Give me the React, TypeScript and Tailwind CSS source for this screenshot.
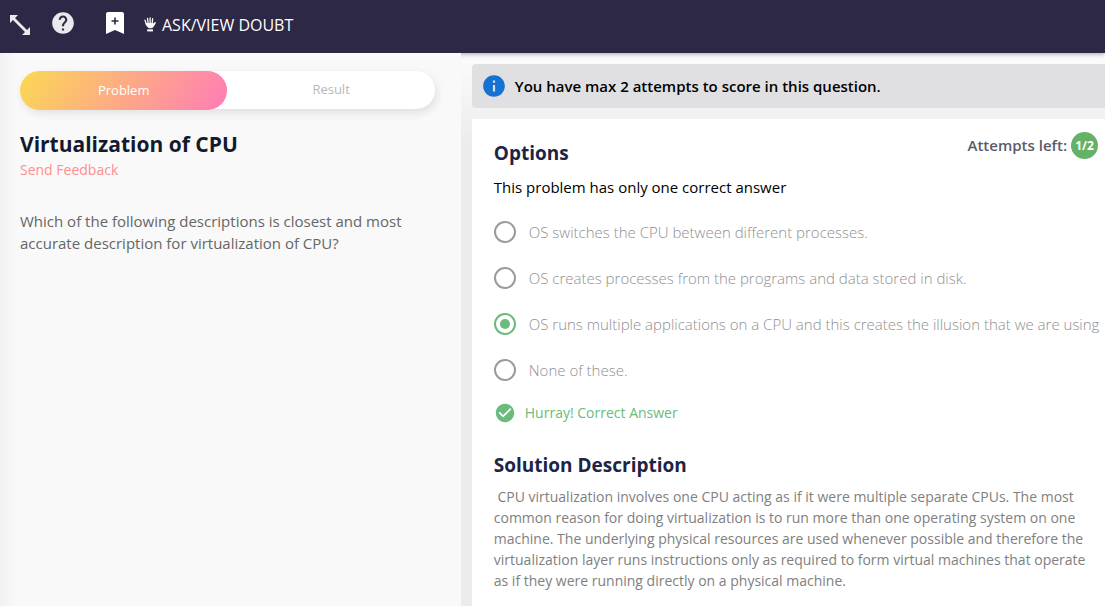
import React from "react";
import { MdCheckCircle, MdHelp, MdInfo } from "react-icons/md";

const options = [
  "OS switches the CPU between different processes.",
  "OS creates processes from the programs and data stored in disk.",
  "OS runs multiple applications on a CPU and this creates the illusion that we are using",
  "None of these.",
];

function ExpandIcon() {
  return (
    <svg width="20" height="20" viewBox="0 0 20 20" fill="#e9e9ee" aria-hidden="true">
      <path d="M0 0h8L5 3l12 12 3-3v8h-8l3-3L3 5 0 8z" />
    </svg>
  );
}

function BookmarkIcon() {
  return (
    <svg width="18" height="22" viewBox="0 0 18 22" aria-hidden="true">
      <path d="M2 0h14a2 2 0 0 1 2 2v20l-9-4L0 22V2a2 2 0 0 1 2-2z" fill="#fff" />
      <path d="M9 5.500v7M5.500 9h7" stroke="#2c2846" strokeWidth="1.600" />
    </svg>
  );
}

function HandIcon() {
  return (
    <svg width="12" height="15" viewBox="0 0 12 15" fill="none" stroke="#fff" strokeLinecap="round" aria-hidden="true">
      <path d="M1 3.200L2.600 8M3.500 1.300L4.200 7M6.100 .8v6M8.700 1.600L8.100 7" strokeWidth="1.300" />
      <path
        d="M2.200 6.500h6.200l.6 .6 1.700-1.600c.6-.3 1 .1.7 .7L8.800 10.300c-1 .8-3.800 .8-4.800 0z"
        fill="#fff"
        strokeWidth="0.800"
        strokeLinejoin="round"
      />
      <path d="M3.200 13.400h5.800" strokeWidth="2" strokeLinecap="butt" />
    </svg>
  );
}

export default function App() {
  return (
    <div className="flex min-h-screen flex-col overflow-hidden bg-[#ececec] font-['Open_Sans','Noto_Sans',sans-serif]">
      <header className="relative z-0 flex h-[53px] items-center bg-[#2c2846] px-2.5 pb-1 text-white shadow-[0_1px_5px_rgba(0,0,0,0.35)]">
        <button type="button" aria-label="Expand">
          <ExpandIcon />
        </button>
        <button type="button" aria-label="Help" className="mb-1 ml-5">
          <MdHelp size={26} color="#e9e9ee" />
        </button>
        <button type="button" aria-label="Bookmark" className="mb-1 ml-[30px]">
          <BookmarkIcon />
        </button>
        <button type="button" className="ml-5 flex items-center gap-1.5 text-[16px]">
          <HandIcon />
          ASK/VIEW DOUBT
        </button>
      </header>

      <main className="flex flex-1">
        <section className="relative z-10 w-[41.7%] shrink-0 bg-[#f9f9f9] bg-linear-to-r from-[#f1f1f1] to-[#f9f9f9] to-[16px] px-5 pt-[18px]">
          <div
            role="tablist"
            className="mr-1.5 flex h-[38px] rounded-full bg-white text-[13px] shadow-[2px_4px_10px_rgba(0,0,0,0.1)]"
          >
            <button
              type="button"
              role="tab"
              aria-selected="true"
              className="h-[39px] flex-1 rounded-full bg-linear-[120deg] from-[#fbd854] to-[#ff7cb6] text-white"
            >
              Problem
            </button>
            <button type="button" role="tab" aria-selected="false" className="flex-1 text-[#b8b8b8]">
              Result
            </button>
          </div>
          <h1 className="mt-[22px] text-[21px] leading-[26px] font-bold text-[#141a2e]">Virtualization of CPU</h1>
          <a href="#feedback" className="mt-[3px] block text-[14px] leading-5 text-[#ff8f8f]">
            Send Feedback
          </a>
          <p className="mt-[30px] max-w-[400px] text-[15px] leading-[22px] text-[#666]">
            Which of the following descriptions is closest and most accurate description for virtualization of CPU?
          </p>
        </section>

        <section className="flex min-w-0 flex-1 flex-col gap-[11px] bg-linear-to-b from-[#fcfcfc] to-[#ececec] to-[90px] pt-[11px] pl-[11px]">
          <div className="flex h-11 items-center gap-2 rounded-l bg-[#e0e0e2] px-[9px] text-[15px] font-semibold text-black">
            <MdInfo size={26} color="#1572d3" />
            You have max 2 attempts to score in this question.
          </div>

          <div className="flex-1 bg-white pt-[21px] pr-4 pl-[22px]">
            <div className="flex items-start justify-between">
              <h2 id="options-title" className="text-[19px] leading-[26px] font-bold text-[#1d2445]">
                Options
              </h2>
              <div className="-mt-2 -mr-[9px] flex items-center gap-1 text-[15px] font-semibold text-[#5b5b66]">
                Attempts left:
                <span className="flex size-[27px] items-center justify-center rounded-full bg-[#66b168] text-[12px] font-bold text-white">
                  1/2
                </span>
              </div>
            </div>
            <p className="mt-[9px] text-[15px] leading-6 text-black">This problem has only one correct answer</p>

            <div role="radiogroup" aria-labelledby="options-title" className="mt-[10px]">
              {options.map((text, i) => (
                <label
                  key={text}
                  className="flex h-[46px] items-center gap-[13px] text-[15px] font-light whitespace-nowrap text-[#8f8f8f]"
                >
                  <input
                    type="radio"
                    name="answer"
                    defaultChecked={i === 2}
                    className="size-[22px] shrink-0 appearance-none rounded-full border-2 border-[#9b9b9b] checked:border-[#6abb7c] checked:bg-[#6abb7c] checked:bg-clip-content checked:p-[4px]"
                  />
                  {text}
                </label>
              ))}
            </div>

            <p className="mt-2 flex items-center gap-[9px] text-[14px] leading-6 text-[#6abb7c]">
              <MdCheckCircle size={22} />
              Hurray! Correct Answer
            </p>

            <h2 className="mt-[27px] text-[19px] leading-[26px] font-bold text-[#1d2445]">Solution Description</h2>
            <p className="mt-2 text-[14px] leading-[21px] text-[#808080]">
              &nbsp;CPU virtualization involves one CPU acting as if it were multiple separate CPUs. The most common
              reason for doing virtualization is to run more than one operating system on one machine. The underlying
              physical resources are used whenever possible and therefore the virtualization layer runs instructions
              only as required to form virtual machines that operate as if they were running directly on a physical
              machine.
            </p>
          </div>
        </section>
      </main>
    </div>
  );
}
